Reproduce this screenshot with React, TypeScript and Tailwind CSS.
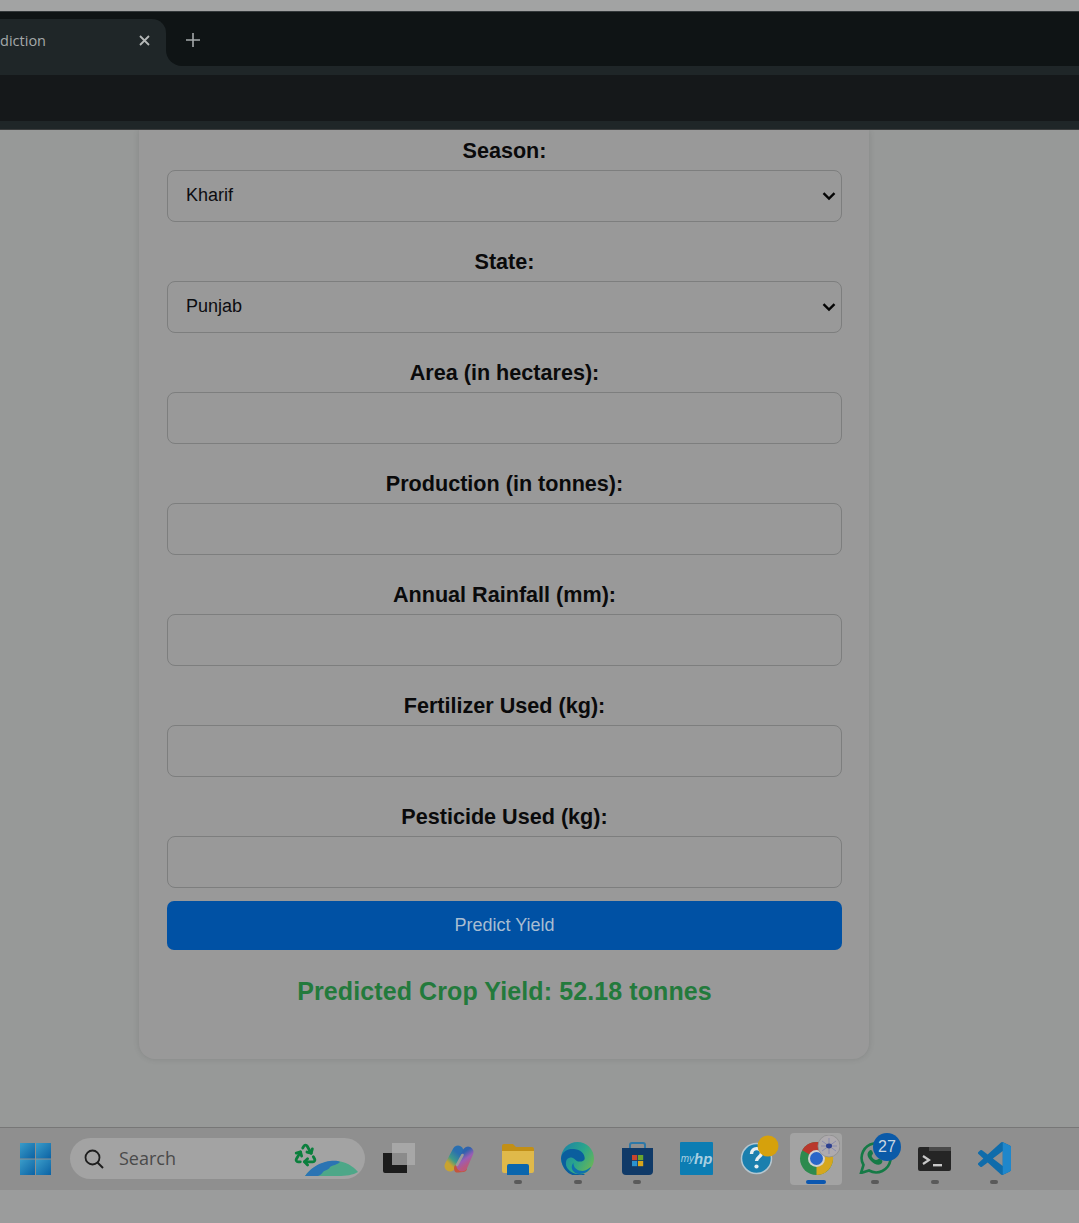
import { Recycle } from "lucide-react";

const SANS = "font-['Liberation_Sans',Arial,sans-serif]";

function Label({ children }: { children: string }) {
  return (
    <label className="block h-[24px] mb-[7px] text-center text-[21.6px] leading-[24px] font-bold text-[#0a0a0b]">
      {children}
    </label>
  );
}

function SelectField({ label, value }: { label: string; value: string }) {
  return (
    <div className="mb-[28.4px]">
      <Label>{label}</Label>
      <div className="h-[51.6px] flex items-center justify-between pl-[18px] pr-[5px] rounded-[8px] border border-[#7d7e7e] bg-[#999999] text-[18px] text-[#0c0c10]">
        <span>{value}</span>
        <svg width="14" height="10" viewBox="0 0 14 10" fill="none">
          <path d="M1.5 2.2 7 7.6l5.5-5.4" stroke="#050505" strokeWidth="2.4" />
        </svg>
      </div>
    </div>
  );
}

function InputField({ label, last }: { label: string; last?: boolean }) {
  return (
    <div className={last ? "mb-[13.4px]" : "mb-[28.4px]"}>
      <Label>{label}</Label>
      <input
        type="text"
        aria-label={label}
        className="block w-full h-[51.6px] rounded-[8px] border border-[#7d7e7e] bg-[#999999] outline-none"
      />
    </div>
  );
}

function Dot({ active }: { active?: boolean }) {
  return (
    <div
      className={
        active
          ? "h-[4px] w-[20px] rounded-full bg-[#0b57b0]"
          : "h-[4px] w-[8px] rounded-full bg-[#5a5a5a]"
      }
    />
  );
}

function Slot({ children, dot, active }: { children: React.ReactNode; dot?: boolean; active?: boolean }) {
  return (
    <div className="w-[59.5px] h-full shrink-0 flex justify-center pt-[5px]">
      <div
        className={
          "w-[52px] h-[52px] flex flex-col items-center justify-between pb-[1px] pt-[9px] rounded-[4px] " +
          (active ? "bg-[#a3a3a3]" : "")
        }
      >
        {children}
        {dot ? <Dot active={active} /> : <div className="h-[4px]" />}
      </div>
    </div>
  );
}

function WinLogo() {
  return (
    <svg width="31" height="32" viewBox="0 0 31 32">
      <defs>
        <linearGradient id="w" x1="0" y1="0" x2="1" y2="1">
          <stop offset="0" stopColor="#3a9cc9" />
          <stop offset="1" stopColor="#0b62a4" />
        </linearGradient>
      </defs>
      <rect x="0" y="0" width="15" height="15.5" fill="url(#w)" />
      <rect x="16" y="0" width="15" height="15.5" fill="url(#w)" />
      <rect x="0" y="16.5" width="15" height="15.5" fill="url(#w)" />
      <rect x="16" y="16.5" width="15" height="15.5" fill="url(#w)" />
    </svg>
  );
}

function PillArt() {
  return (
    <svg width="64" height="34" viewBox="0 0 64 34" className="mt-[2px]">
      <Recycle x="-1" y="-1" size={25} color="#0b7f3d" strokeWidth={2.7} />
      <path d="M11 33C17 24 30 18 42 18c9 0 17 5 22 11-5 3-12 4-20 4z" fill="#4da788" />
      <path d="M11 33C16 26 23 21 31 19c9-2 13-1 15 0-3 3-7 3-10 5-1 3-5 3-7 5-1 2-3 3-5 4z" fill="#2b74b3" />
    </svg>
  );
}

function TaskView() {
  return (
    <svg width="32" height="30" viewBox="0 0 32 30" className="mt-[1px]">
      <path d="M0 10h9v12h15v8H2a2 2 0 0 1-2-2z" fill="#1c1c1c" />
      <rect x="9" y="0" width="23" height="22" fill="#a7a7a7" />
      <rect x="9" y="10" width="15" height="12" fill="#8b8b8b" />
    </svg>
  );
}

function Copilot() {
  return (
    <svg width="32" height="28" viewBox="0 0 32 28" className="mt-[3px]">
      <defs>
        <linearGradient id="c1" x1="0.7" y1="0" x2="0.2" y2="1">
          <stop offset="0" stopColor="#2a6fb0" />
          <stop offset="0.6" stopColor="#3f9a88" />
          <stop offset="1" stopColor="#c9a32f" />
        </linearGradient>
        <linearGradient id="c2" x1="0.4" y1="0" x2="0.7" y2="1">
          <stop offset="0" stopColor="#2f63ad" />
          <stop offset="0.5" stopColor="#9a5db5" />
          <stop offset="1" stopColor="#b9587f" />
        </linearGradient>
      </defs>
      <path d="M15 6 7 21" stroke="url(#c1)" strokeWidth="11" strokeLinecap="round" />
      <path d="M15 23.5 20 23" stroke="#c4553c" strokeWidth="8" strokeLinecap="round" />
      <path d="M25 7 19 21" stroke="url(#c2)" strokeWidth="11" strokeLinecap="round" />
      <path d="M19.5 10 14 20" stroke="#9a9a9a" strokeWidth="2.6" strokeLinecap="round" />
    </svg>
  );
}

function Folder() {
  return (
    <svg width="32" height="32" viewBox="0 0 32 32" className="mt-[1px]">
      <path d="M0 3a2 2 0 0 1 2-2h9l3 3h16a2 2 0 0 1 2 2v3H0z" fill="#c28f16" />
      <path d="M0 8h32v20a2 2 0 0 1-2 2H2a2 2 0 0 1-2-2z" fill="#e0b94a" />
      <path d="M5 23a2 2 0 0 1 2-2h18a2 2 0 0 1 2 2v9H5z" fill="#0b66ad" />
    </svg>
  );
}

function Edge() {
  return (
    <svg width="33" height="33" viewBox="0 0 32 32">
      <defs>
        <linearGradient id="e1" x1="0" y1="0" x2="1" y2="0.6">
          <stop offset="0" stopColor="#1a7fa8" />
          <stop offset="0.6" stopColor="#2aa58c" />
          <stop offset="1" stopColor="#63b45c" />
        </linearGradient>
      </defs>
      <circle cx="16" cy="16" r="16" fill="url(#e1)" />
      <path d="M0 16C1 8 8 6 14 7c6 1 9 5 9 9 0 2-2 3-5 3-4 0-5-4-8-4-4 0-6 3-5 8 2 6 9 9 16 8 2 0 3 0 1 1-9 3-20-1-22-16z" fill="#0b5e9e" />
      <path d="M12 20c0 5 4 8 9 8 3 0 6-2 8-4-1 4-6 7-11 7-6 0-10-6-6-11z" fill="#0f6fae" />
    </svg>
  );
}

function Store() {
  return (
    <svg width="33" height="33" viewBox="0 0 33 33">
      <path d="M9 6V3a2 2 0 0 1 2-2h11a2 2 0 0 1 2 2v3" fill="none" stroke="#2d78a8" strokeWidth="2" />
      <path d="M1 6h31v23a4 4 0 0 1-4 4H5a4 4 0 0 1-4-4z" fill="#103a68" />
      <rect x="11" y="13" width="5.2" height="5.2" fill="#c9452e" />
      <rect x="17" y="13" width="5.2" height="5.2" fill="#69a52e" />
      <rect x="11" y="19" width="5.2" height="5.2" fill="#2a92cf" />
      <rect x="17" y="19" width="5.2" height="5.2" fill="#d8a51c" />
    </svg>
  );
}

function MyHp() {
  return (
    <div className="w-[33px] h-[33px] rounded-[1px] bg-[#0c7db3] flex items-center justify-center text-[#a9cfe1] italic text-[10px] leading-none">
      my<span className="font-bold text-[15px]">hp</span>
    </div>
  );
}

function Help() {
  return (
    <svg width="46" height="40" viewBox="0 0 46 40" className="-mt-[7px]">
      <circle cx="23.5" cy="23.5" r="15" fill="#1b7fae" stroke="#b5c6cf" strokeWidth="1.5" />
      <path d="M18.5 19c0-7 10-7 10-1 0 4-5 4-5 8" fill="none" stroke="#e8eef0" strokeWidth="3.4" />
      <circle cx="23.5" cy="31.5" r="2.1" fill="#e8eef0" />
      <circle cx="35" cy="11" r="10.5" fill="#d6a10c" />
    </svg>
  );
}

function Chrome() {
  return (
    <svg width="47" height="40" viewBox="0 0 47 40" className="-mt-[7px] ml-[2px]">
      <circle cx="23.5" cy="23.5" r="16.5" fill="#2d8a4e" />
      <path d="M23.5 23.5 9.2 15.25A16.5 16.5 0 0 1 37.8 15.25z" fill="#b9372c" />
      <path d="M23.5 23.5 37.8 15.25A16.5 16.5 0 0 1 23.5 40z" fill="#d6a71d" />
      <circle cx="23.5" cy="23.5" r="8.5" fill="#d0d0d0" />
      <circle cx="23.5" cy="23.5" r="6.5" fill="#2a66c9" />
      <circle cx="36" cy="11" r="11" fill="#aeaaae" stroke="#8d8d8d" strokeWidth="0.8" />
      <path d="M29 6 43 16M43 6 29 16M36 3v16M28 11h16" stroke="#7a7fae" strokeWidth="0.7" />
      <ellipse cx="36" cy="11" rx="3" ry="2.4" fill="#2c3f8f" />
    </svg>
  );
}

function WhatsApp() {
  return (
    <div className="relative w-[52px] h-[32px]">
      <svg width="33" height="32" viewBox="0 0 33 32" className="ml-[10px]">
        <path d="M2 31l2.5-8A14.5 14.5 0 1 1 10 28.5z" fill="none" stroke="#157a46" strokeWidth="2.6" />
        <path d="M10 9c2-2 3-1 4 2 0 2-2 2-1 4 1 2 3 3 4 3 2 0 2-2 4-1 3 1 3 3 1 5-3 2-7 0-10-3s-5-7-2-10z" fill="#157a46" />
      </svg>
      <div className={`absolute -top-[9px] left-[24px] w-[28px] h-[28px] rounded-full bg-[#0b5aa8] flex items-center justify-center text-[16px] text-[#c9d6e2] ${SANS}`}>
        27
      </div>
    </div>
  );
}

function Terminal() {
  return (
    <svg width="33" height="24" viewBox="0 0 33 24" className="mt-[5px]">
      <rect x="0" y="0" width="33" height="24" rx="2" fill="#252525" />
      <rect x="11" y="0" width="22" height="4" fill="#4a4a4a" />
      <path d="M5 9l6 4-6 4" fill="none" stroke="#c8c8c8" strokeWidth="2.2" />
      <rect x="15" y="17" width="9" height="2.4" fill="#c8c8c8" />
    </svg>
  );
}

function VsCode() {
  return (
    <svg width="33" height="33" viewBox="0 0 24 24">
      <path
        d="M23.15 2.587L18.21.21a1.494 1.494 0 0 0-1.705.29l-9.46 8.63-4.12-3.128a.999.999 0 0 0-1.276.057L.327 7.261A1 1 0 0 0 .326 8.74L3.899 12 .326 15.26a1 1 0 0 0 .001 1.479L1.65 17.94a.999.999 0 0 0 1.276.057l4.12-3.128 9.46 8.63a1.492 1.492 0 0 0 1.704.29l4.942-2.377A1.5 1.5 0 0 0 24 20.06V3.939a1.5 1.5 0 0 0-.85-1.352zm-5.146 14.861L10.826 12l7.178-5.448v10.896z"
        fill="#0f6cab"
      />
      <path d="M18 0.1l5.15 2.487A1.5 1.5 0 0 1 24 3.939V20.06a1.5 1.5 0 0 1-.85 1.352L18 23.9z" fill="#1f87cc" />
    </svg>
  );
}

export default function App() {
  return (
    <div className={`w-[1079px] h-[1223px] overflow-hidden flex flex-col bg-[#a1a2a2] ${SANS}`}>
      <div className="h-[11px] shrink-0 bg-[#a2a3a3]" />

      {/* Browser chrome */}
      <div className="h-[64px] shrink-0 flex bg-[#1f2628] border-t border-[#33383a]">
        <div className="w-[166px] bg-[#0f1415] pt-[7px]">
          <div className="h-full rounded-tr-[14px] bg-[#1f2628] flex items-start pt-[12px] pr-[15px] justify-between">
            <div className="w-[46px] overflow-hidden flex justify-end whitespace-nowrap font-['Open_Sans',sans-serif] text-[14.5px] leading-[20px] text-[#a5a9aa]">
              <span className="shrink-0">Prediction</span>
            </div>
            <svg width="13" height="13" viewBox="0 0 13 13" className="mt-[3px]">
              <path d="M2 2l9 9M11 2l-9 9" stroke="#b5b8b8" strokeWidth="1.8" />
            </svg>
          </div>
        </div>
        <div className="flex-1 h-[54px] bg-[#0f1415] rounded-bl-[16px] pl-[20px] pt-[21px]">
          <svg width="14" height="14" viewBox="0 0 14 14">
            <path d="M7 0v14M0 7h14" stroke="#a5a9aa" strokeWidth="1.6" />
          </svg>
        </div>
      </div>
      <div className="h-[46px] shrink-0 bg-[#15181a]" />
      <div className="h-[9px] shrink-0 bg-[#1f2628] border-b border-[#3a3c3d]" />

      {/* Page */}
      <main className="h-[997px] shrink-0 overflow-hidden bg-[#979998]">
        <div className="ml-[139px] w-[730px] h-[929px] rounded-b-[16px] bg-[#999999] pl-[28px] pr-[27px] pt-[9px] shadow-[0_0_6px_rgba(0,0,0,0.12)]">
          <SelectField label="Season:" value="Kharif" />
          <SelectField label="State:" value="Punjab" />
          <InputField label="Area (in hectares):" />
          <InputField label="Production (in tonnes):" />
          <InputField label="Annual Rainfall (mm):" />
          <InputField label="Fertilizer Used (kg):" />
          <InputField label="Pesticide Used (kg):" last />
          <button className="block w-full h-[49px] rounded-[7px] bg-[#0051a4] text-[18px] text-[#a8bdd2]">
            Predict Yield
          </button>
          <div className="mt-[26px] text-center text-[25px] leading-[30px] font-bold tracking-[0.1px] text-[#237a3c]">
            Predicted Crop Yield: 52.18 tonnes
          </div>
        </div>
      </main>

      {/* Taskbar */}
      <footer className="h-[63px] shrink-0 flex items-start bg-[#8f8f8f] border-t border-[#777777]">
        <div className="w-[70px] h-full flex justify-center pt-[15px] shrink-0">
          <WinLogo />
        </div>
        <div className="w-[295px] h-[41px] mt-[10px] rounded-full bg-[#a3a3a3] flex items-center pl-[14px] pr-[7px] shrink-0">
          <svg width="20" height="20" viewBox="0 0 20 20" fill="none">
            <circle cx="8.5" cy="8.5" r="7" stroke="#1e1e1e" strokeWidth="1.8" />
            <path d="M13.5 13.5 19 19" stroke="#1e1e1e" strokeWidth="2" />
          </svg>
          <span className="ml-[15px] font-['Open_Sans',sans-serif] text-[18px] text-[#4a4a4a] flex-1">Search</span>
          <PillArt />
        </div>
        <div className="w-[4.25px] shrink-0" />
        <Slot><TaskView /></Slot>
        <Slot><Copilot /></Slot>
        <Slot dot><Folder /></Slot>
        <Slot dot><Edge /></Slot>
        <Slot dot><Store /></Slot>
        <Slot><MyHp /></Slot>
        <Slot><Help /></Slot>
        <Slot dot active><Chrome /></Slot>
        <Slot dot><WhatsApp /></Slot>
        <Slot dot><Terminal /></Slot>
        <Slot dot><VsCode /></Slot>
      </footer>
      <div className="flex-1 bg-[#9b9c9c]" />
    </div>
  );
}
